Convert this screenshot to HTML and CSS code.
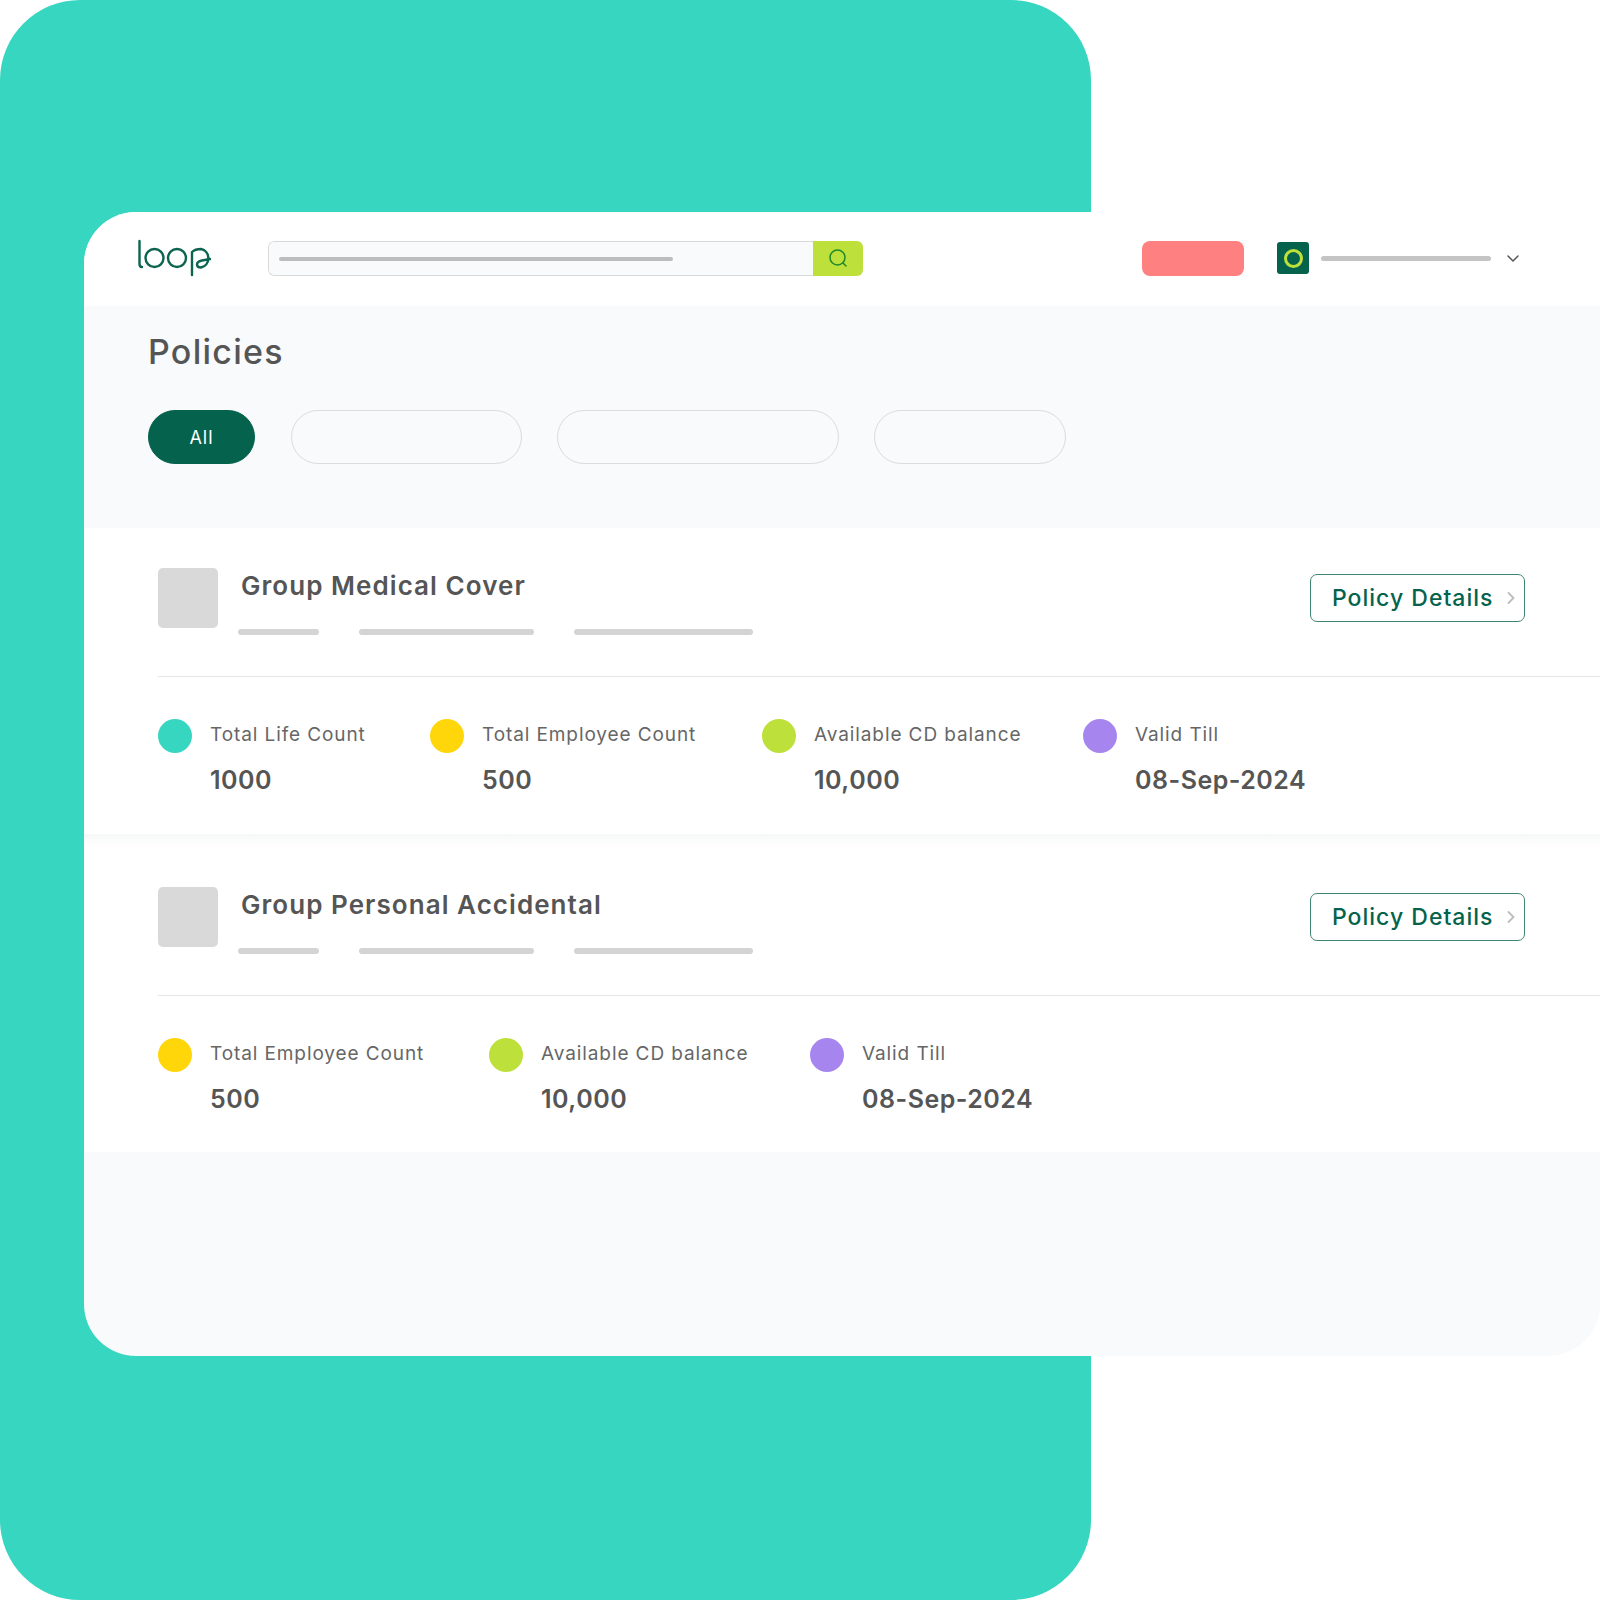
FILE: index.html
```html
<!DOCTYPE html>
<html>
<head>
    <title>Policies</title>
    <link rel="stylesheet" href="styles.css">
</head>
<body>
    <div class="teal"></div>
    <div class="app">
        <div class="topbar">
            <svg class="logo" viewBox="0 0 75 38" fill="none" stroke="#0b6350" stroke-width="2.4" stroke-linecap="round">
                <path d="M2.500 2V25Q2.500 28 5 28"/>
                <circle cx="17.500" cy="19" r="9"/>
                <circle cx="40" cy="19" r="9"/>
                <path d="M55 36V13Q58 10 64 10A9.500 9.500 0 0 1 64 28.500Q60 28.500 60 25.500Q60 22.500 65 21.500L73 20"/>
            </svg>
            <div class="search">
                <div class="search-text"><span class="search-line"></span></div>
                <div class="search-btn">
                    <svg class="search-icon" width="20" height="20" viewBox="0 0 20 20" fill="none" stroke="#1f8a2c" stroke-width="1.500" stroke-linecap="round">
                        <circle cx="9.500" cy="9.500" r="7.500"/>
                        <path d="M15 15L18 18"/>
                    </svg>
                </div>
            </div>
            <div class="red-btn"></div>
            <div class="avatar"><span class="avatar-ring"></span></div>
            <div class="user-line"></div>
            <svg class="chevron" width="14" height="9" viewBox="0 0 14 9" fill="none" stroke="#555" stroke-width="1.500" stroke-linecap="round" stroke-linejoin="round">
                <path d="M2 2L7 7L12 2"/>
            </svg>
        </div>

        <div class="head">
            <h1 class="title">Policies</h1>
            <div class="pills">
                <div class="pill pill-active">All</div>
                <div class="pill pill-a"></div>
                <div class="pill pill-b"></div>
                <div class="pill pill-c"></div>
            </div>
        </div>

        <div class="policy">
            <div class="policy-top">
                <div class="thumb"></div>
                <div class="policy-name">
                    <h2>Group Medical Cover</h2>
                    <div class="bars"><span class="bar bar1"></span><span class="bar bar2"></span><span class="bar bar3"></span></div>
                </div>
                <div class="details-btn">Policy Details
                    <svg width="8" height="14" viewBox="0 0 8 14" fill="none" stroke="#bdbdbd" stroke-width="1.800" stroke-linecap="round" stroke-linejoin="round"><path d="M1.500 2L6.500 7L1.500 12"/></svg>
                </div>
            </div>
            <div class="stats">
                <div class="stat life"><span class="dot teal-dot"></span><div><div class="label">Total Life Count</div><div class="value">1000</div></div></div>
                <div class="stat emp"><span class="dot yellow-dot"></span><div><div class="label">Total Employee Count</div><div class="value">500</div></div></div>
                <div class="stat cd"><span class="dot lime-dot"></span><div><div class="label">Available CD balance</div><div class="value">10,000</div></div></div>
                <div class="stat"><span class="dot purple-dot"></span><div><div class="label">Valid Till</div><div class="value">08-Sep-2024</div></div></div>
            </div>
        </div>

        <div class="gap"></div>

        <div class="policy policy-second">
            <div class="policy-top">
                <div class="thumb"></div>
                <div class="policy-name">
                    <h2>Group Personal Accidental</h2>
                    <div class="bars"><span class="bar bar1"></span><span class="bar bar2"></span><span class="bar bar3"></span></div>
                </div>
                <div class="details-btn">Policy Details
                    <svg width="8" height="14" viewBox="0 0 8 14" fill="none" stroke="#bdbdbd" stroke-width="1.800" stroke-linecap="round" stroke-linejoin="round"><path d="M1.500 2L6.500 7L1.500 12"/></svg>
                </div>
            </div>
            <div class="stats">
                <div class="stat emp2"><span class="dot yellow-dot"></span><div><div class="label">Total Employee Count</div><div class="value">500</div></div></div>
                <div class="stat cd"><span class="dot lime-dot"></span><div><div class="label">Available CD balance</div><div class="value">10,000</div></div></div>
                <div class="stat"><span class="dot purple-dot"></span><div><div class="label">Valid Till</div><div class="value">08-Sep-2024</div></div></div>
            </div>
        </div>
    </div>
</body>
</html>
```

FILE: styles.css
```css
html, body {
    margin: 0;
    height: 1600px;
    overflow: hidden;
    background: #fff;
}
body {
    position: relative;
    font-family: Inter, "Open Sans", "Liberation Sans", sans-serif;
    color: #555;
}
.teal {
    position: absolute;
    left: 0;
    top: 0;
    width: 1091px;
    height: 1600px;
    background: #37d6c0;
    border-radius: 80px;
}
.app {
    position: absolute;
    left: 84px;
    top: 212px;
    width: 1516px;
    height: 1144px;
    background: #f8fafb;
    border-radius: 52px;
    overflow: hidden;
}
.topbar {
    height: 94px;
    background: #fff;
    display: flex;
    align-items: center;
}
.logo {
    width: 75px;
    height: 38px;
    margin-left: 53px;
    margin-top: -2px;
}
.search {
    width: 595px;
    height: 35px;
    margin-left: 56px;
    display: flex;
    border-radius: 6px;
    overflow: hidden;
    margin-top: -1px;
}
.search-text {
    flex: 1;
    background: #f8fafb;
    border: 1.500px solid #d9d9d9;
    border-right: none;
    border-radius: 6px 0 0 6px;
    display: flex;
    align-items: center;
    padding-left: 10px;
}
.search-line {
    width: 394px;
    height: 4px;
    border-radius: 2px;
    background: #bdbdbd;
}
.search-btn {
    width: 50px;
    background: #bee03a;
    display: flex;
    align-items: center;
    justify-content: center;
}
.search-icon {
    margin-top: -2px;
}
.red-btn {
    width: 102px;
    height: 35px;
    margin-left: 279px;
    margin-top: -1px;
    background: #ff8080;
    border-radius: 8px;
}
.avatar {
    width: 32px;
    height: 32px;
    margin-left: 33px;
    margin-top: -2px;
    background: #05634d;
    border-radius: 3px;
    display: flex;
    align-items: center;
    justify-content: center;
}
.avatar-ring {
    width: 13px;
    height: 13px;
    border: 3px solid #bee03a;
    border-radius: 50%;
}
.user-line {
    width: 170px;
    height: 5px;
    margin-left: 12px;
    margin-top: -2px;
    border-radius: 3px;
    background: #c4c4c4;
}
.chevron {
    margin-left: 15px;
    margin-top: -2px;
}
.head {
    height: 222px;
    box-sizing: border-box;
    padding: 25px 0 0 64px;
}
.title {
    margin: 0;
    font-size: 34px;
    line-height: 42px;
    font-weight: 500;
    letter-spacing: 1.25px;
}
.pills {
    display: flex;
    gap: 35.500px;
    margin-top: 38px;
}
.pill {
    height: 54px;
    box-sizing: border-box;
    border: 1.500px solid #d8dddd;
    border-radius: 27px;
    margin-top: -1.500px;
}
.pill-active {
    width: 107px;
    background: #05634d;
    border-color: #05634d;
    color: #fff;
    font-size: 18px;
    letter-spacing: 1px;
    display: flex;
    align-items: center;
    justify-content: center;
    margin-top: -1px;
}
.pill-a { width: 231px; }
.pill-b { width: 281.500px; }
.pill-c { width: 191.500px; }
.policy {
    height: 306px;
    box-sizing: border-box;
    padding: 40px 0 0 74px;
    background: #fff;
}
.policy-second {
    height: 305px;
}
.gap {
    height: 13px;
    background: linear-gradient(#f6f8f8, #fff);
}
.policy-top {
    display: flex;
    height: 109px;
    box-sizing: border-box;
    border-bottom: 1.500px solid #e4e6e8;
}
.thumb {
    width: 60px;
    height: 60px;
    background: #d9d9d9;
    border-radius: 5px;
}
.policy-name {
    margin-left: 23px;
    width: 1069px;
}
.policy-name h2 {
    margin: 0;
    font-size: 26px;
    line-height: 36px;
    font-weight: 600;
    letter-spacing: 1.05px;
}
.bars {
    display: flex;
    gap: 40px;
    margin-top: 25px;
    margin-left: -3px;
}
.bar {
    height: 6px;
    border-radius: 3px;
    background: #d4d4d4;
}
.bar1 { width: 81px; }
.bar2 { width: 175px; }
.bar3 { width: 179px; }
.details-btn {
    width: 215px;
    height: 48px;
    margin-top: 6px;
    box-sizing: border-box;
    border: 1.500px solid #3f8573;
    border-radius: 7px;
    color: #05634d;
    font-size: 23px;
    font-weight: 500;
    letter-spacing: 1px;
    display: flex;
    align-items: center;
    justify-content: space-between;
    padding: 0 9px 0 21px;
}
.stats {
    display: flex;
    padding-top: 42px;
}
.stat {
    display: flex;
    gap: 18px;
}
.life { width: 272px; }
.emp { width: 332px; }
.cd { width: 321px; }
.emp2 { width: 331px; }
.dot {
    width: 34px;
    height: 34px;
    border-radius: 50%;
}
.teal-dot { background: #37d6c0; }
.yellow-dot { background: #ffd60a; }
.lime-dot { background: #bee03a; }
.purple-dot { background: #a686ee; }
.label {
    font-size: 19px;
    line-height: 28px;
    margin-top: 2px;
    letter-spacing: 0.9px;
    color: #666;
}
.value {
    font-size: 25px;
    line-height: 36px;
    margin-top: 13px;
    font-weight: 600;
    letter-spacing: 0.5px;
}
```
